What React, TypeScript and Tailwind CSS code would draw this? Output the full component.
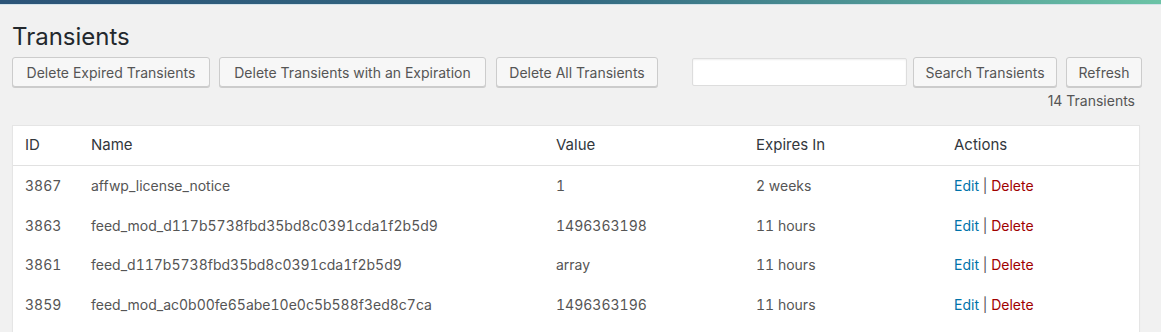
const rows = [
  { id: "3867", name: "affwp_license_notice", value: "1", expires: "2 weeks" },
  { id: "3863", name: "feed_mod_d117b5738fbd35bd8c0391cda1f2b5d9", value: "1496363198", expires: "11 hours" },
  { id: "3861", name: "feed_d117b5738fbd35bd8c0391cda1f2b5d9", value: "array", expires: "11 hours" },
  { id: "3859", name: "feed_mod_ac0b00fe65abe10e0c5b588f3ed8c7ca", value: "1496363196", expires: "11 hours" },
];

const cols = "grid grid-cols-[66px_465px_200px_198px_1fr] items-center px-[12px]";

function Button({ label, width }: { label: string; width: string }) {
  return (
    <button
      className={`${width} h-[30px] shrink-0 rounded-[3px] border border-[#cccccc] bg-[#f7f7f7] text-[14px] text-[#555555] shadow-[0_1px_0_#cccccc]`}
    >
      {label}
    </button>
  );
}

export default function App() {
  return (
    <div
      className="h-[332px] overflow-hidden bg-[#f1f1f1] text-[#444444]"
      style={{ fontFamily: "Inter, 'Noto Sans', sans-serif" }}
    >
      <div className="h-[4px] bg-gradient-to-r from-[#2c5478] via-[#346a82] to-[#6cc3a6]" />
      <div className="h-px bg-[#d3e2ea]" />

      <div className="px-[12px] pt-[17px]">
        <h1 className="text-[24px] leading-[29px] text-[#23282d]">Transients</h1>

        <div className="mt-[6px] flex items-center">
          <Button label="Delete Expired Transients" width="w-[198px]" />
          <div className="w-[9px]" />
          <Button label="Delete Transients with an Expiration" width="w-[267px]" />
          <div className="w-[10px]" />
          <Button label="Delete All Transients" width="w-[162px]" />
          <div className="w-[34px]" />
          <input className="h-[28px] w-[215px] rounded-[2px] border border-[#dddddd] bg-white shadow-[inset_0_1px_2px_rgba(0,0,0,0.07)] outline-none" />
          <div className="w-[6px]" />
          <Button label="Search Transients" width="w-[144px]" />
          <div className="w-[9px]" />
          <Button label="Refresh" width="w-[76px]" />
        </div>

        <div className="mt-[5px] w-[1123px] text-right text-[14px] leading-[18px] text-[#555555]">
          14 Transients
        </div>

        <div className="mt-[15px] w-[1128px] border border-[#e5e5e5] bg-white shadow-[0_1px_1px_rgba(0,0,0,0.04)]">
          <div className={`${cols} h-[40px] border-b border-[#e1e1e1] text-[15px] text-[#32373c]`}>
            <span>ID</span>
            <span>Name</span>
            <span>Value</span>
            <span>Expires In</span>
            <span>Actions</span>
          </div>
          {rows.map((r) => (
            <div key={r.id} className={`${cols} h-[39.5px] text-[14px] tabular-nums text-[#555555]`}>
              <span>{r.id}</span>
              <span>{r.name}</span>
              <span>{r.value}</span>
              <span>{r.expires}</span>
              <span>
                <a className="text-[#0073aa]">Edit</a>
                <span className="text-[#555555]"> | </span>
                <a className="text-[#a00000]">Delete</a>
              </span>
            </div>
          ))}
          <div className="h-[30px]" />
        </div>
      </div>
    </div>
  );
}
